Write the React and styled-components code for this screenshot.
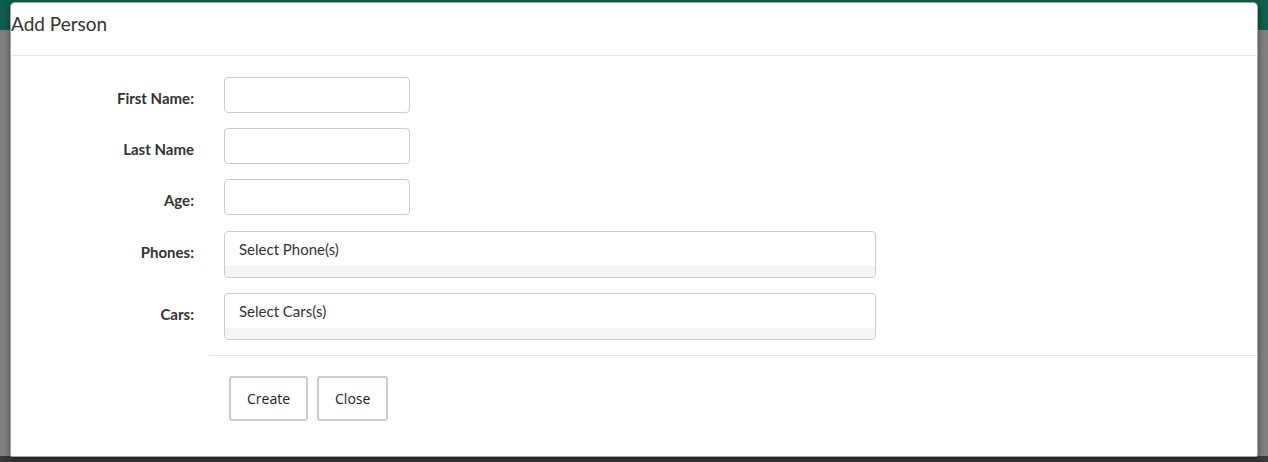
import React from 'react'
import styled, { createGlobalStyle } from 'styled-components'

const GlobalStyle = createGlobalStyle`
    html, body {
        margin: 0;
        padding: 0;
        width: 1268px;
        height: 462px;
        overflow: hidden;
        font-family: Lato, "Open Sans", Arial, sans-serif;
        color: #333;
    }
    * {
        box-sizing: border-box;
    }
`;

const navLeft = ['Brand', 'Administration', 'Users', 'Roles', 'Persons']
const navRight = ['Settings', 'Logout']

const fields = [
    { label: 'First Name:', type: 'text' },
    { label: 'Last Name', type: 'text' },
    { label: 'Age:', type: 'number' },
]

const pickers = [
    { label: 'Phones:', placeholder: 'Select Phone(s)' },
    { label: 'Cars:', placeholder: 'Select Cars(s)' },
]

function App() {
    return (
        <Page>
            <GlobalStyle />
            <NavBar>
                <NavGroup>
                    {navLeft.map(item => <NavItem key={item}>{item}</NavItem>)}
                </NavGroup>
                <NavGroup>
                    {navRight.map(item => <NavItem key={item}>{item}</NavItem>)}
                </NavGroup>
            </NavBar>
            <Backdrop />
            <Footer />

            <Modal>
                <Header>
                    <Title>Add Person</Title>
                </Header>
                <Body>
                    <Form>
                        {fields.map(field => (
                            <Row key={field.label}>
                                <Label>{field.label}</Label>
                                <Input type={field.type} />
                            </Row>
                        ))}
                        {pickers.map((picker, i) => (
                            <Row key={picker.label} $spaced={i === 0}>
                                <Label>{picker.label}</Label>
                                <Picker>
                                    <PickerValue>{picker.placeholder}</PickerValue>
                                    <PickerBar />
                                </Picker>
                            </Row>
                        ))}
                    </Form>
                    <Divider />
                    <Actions>
                        <Button>Create</Button>
                        <Button>Close</Button>
                    </Actions>
                </Body>
            </Modal>
        </Page>
    )
}

export default App

const Page = styled.div`
    position: relative;
    width: 1268px;
    height: 462px;
    display: flex;
    flex-direction: column;
    background-color: #7f7f7f;
`;

const NavBar = styled.div`
    height: 30px;
    background-color: #0d5e4a;
    display: flex;
    justify-content: space-between;
    padding: 3px 62px 0 65px;
`;

const NavGroup = styled.div`
    display: flex;
    gap: 30px;
`;

const NavItem = styled.span`
    font-size: 14px;
    line-height: 16px;
    color: #8fa9a2;
`;

const Backdrop = styled.div`
    flex: 1;
    background-color: #7f7f7f;
`;

const Footer = styled.div`
    height: 6px;
    background-color: #393939;
`;

const Modal = styled.div`
    position: absolute;
    top: 2px;
    left: 10px;
    width: 1248px;
    height: 455px;
    background-color: #fff;
    border: 1px solid rgba(0, 0, 0, 0.35);
    border-radius: 5px 5px 2px 2px;
    box-shadow: 0 2px 6px rgba(0, 0, 0, 0.45);
    display: flex;
    flex-direction: column;
`;

const Header = styled.div`
    height: 53px;
    padding-top: 9px;
    border-bottom: 1px solid #e7e7e7;
`;

const Title = styled.h4`
    margin: 0;
    font-size: 19px;
    font-weight: 400;
    line-height: 24px;
    color: #333;
`;

const Body = styled.div`
    padding-top: 21px;
`;

const Form = styled.div`
    display: flex;
    flex-direction: column;
    gap: 15px;
`;

const Row = styled.div`
    display: grid;
    grid-template-columns: 183px auto;
    column-gap: 30px;
    align-items: start;
    justify-content: start;
    margin-top: ${props => props.$spaced ? '1px' : '0'};
`;

const Label = styled.label`
    font-size: 15px;
    font-weight: 700;
    line-height: 20px;
    padding-top: 11px;
    text-align: right;
    color: #333;
`;

const Input = styled.input`
    width: 186px;
    height: 36px;
    border: 1px solid #ccc;
    border-radius: 4px;
    padding: 6px 12px;
    font-family: inherit;
    font-size: 15px;
    background-color: #fff;
    outline: none;
`;

const Picker = styled.div`
    width: 652px;
    height: 47px;
    border: 1px solid #ccc;
    border-radius: 4px;
    overflow: hidden;
    display: flex;
    flex-direction: column;
`;

const PickerValue = styled.div`
    flex: 1;
    padding: 7px 14px 0;
    font-size: 15px;
    line-height: 20px;
    color: #333;
`;

const PickerBar = styled.div`
    height: 11px;
    background-color: #f4f4f4;
`;

const Divider = styled.div`
    margin: 15px 0 0 198px;
    border-top: 1px solid #e5e5e5;
`;

const Actions = styled.div`
    display: flex;
    gap: 9px;
    padding: 20px 0 0 218px;
`;

const Button = styled.button`
    height: 45px;
    padding: 0 16px;
    border: 2px solid #ccc;
    border-radius: 3px;
    background-color: #fff;
    font-family: "Open Sans", Lato, Arial, sans-serif;
    font-size: 14px;
    color: #222;
    cursor: pointer;
`;
